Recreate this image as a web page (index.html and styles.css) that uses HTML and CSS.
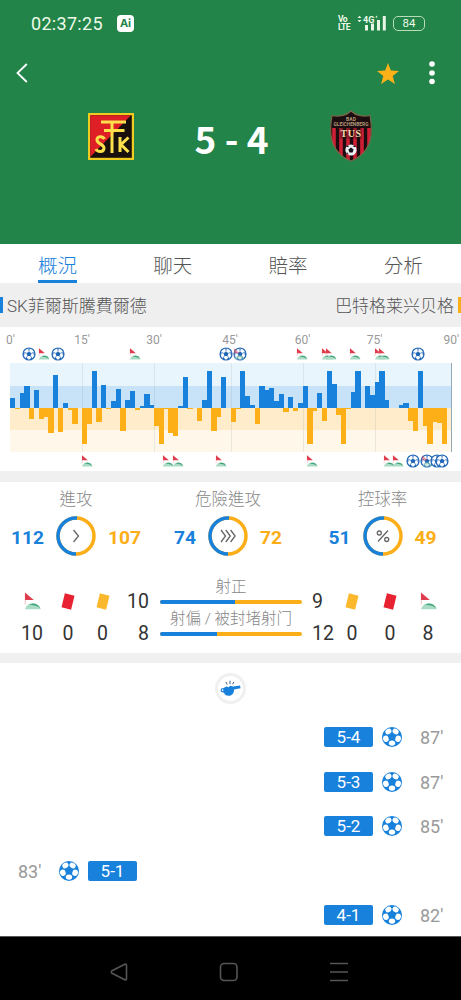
FILE: index.html
```
<!DOCTYPE html>
<html lang="zh-Hant">
<head>
    <meta charset="UTF-8">
    <meta name="viewport" content="width=device-width, initial-scale=1.0">
    <title>SK菲爾斯騰費爾德 5 - 4 巴特格莱兴贝格</title>
    <link rel="stylesheet" href="styles.css">
</head>
<body>
    <!-- Shared icons -->
    <svg class="symbols" aria-hidden="true">
        <symbol id="ball" viewBox="0 0 20 20">
            <circle cx="10" cy="10" r="10" fill="#1881db"/>
            <g fill="#fff">
                <ellipse cx="6.4" cy="4.5" rx="3.2" ry="2.6" transform="rotate(-33 6.4 4.5)"/>
                <ellipse cx="13.6" cy="4.5" rx="3.2" ry="2.6" transform="rotate(33 13.6 4.5)"/>
                <ellipse cx="3.9" cy="11.8" rx="2.8" ry="3.2" transform="rotate(-18 3.9 11.8)"/>
                <ellipse cx="16.1" cy="11.8" rx="2.8" ry="3.2" transform="rotate(18 16.1 11.8)"/>
                <ellipse cx="10" cy="16.1" rx="3.2" ry="2.7"/>
            </g>
            <path d="M10 6.6l3.3 2.4-1.3 3.8H8L6.7 9z" fill="#1881db"/>
        </symbol>
        <symbol id="ball-line" viewBox="0 0 14 14">
            <circle cx="7" cy="7" r="6" fill="#fff" stroke="#2368b8" stroke-width="1.2"/>
            <path d="M7 4.4l2.5 1.8-.9 2.9H5.4l-.9-2.9z" fill="#2368b8"/>
            <path d="M7 4.4V2.6M9.5 6.2l2-.7M8.6 9.1l1.3 1.8M5.4 9.1l-1.3 1.8M4.5 6.2l-2-.7" stroke="#2368b8" stroke-width=".8"/>
            <path d="M4.8 1.5L7 2.7l2.2-1.2zM12.7 5l-1.3.6.4 2.6 1.1.2zM10.6 11.8l-.8-1.2-2 1.4.4 1zM3.4 11.8l.8-1.2 2 1.4-.4 1zM1.3 5l1.3.6-.4 2.6-1.1.2z" fill="#2368b8"/>
        </symbol>
        <symbol id="corner" viewBox="0 0 17 18">
            <path d="M1.3 1v11.5" stroke="#eda9ad" stroke-width=".7"/>
            <path d="M1 .5L9.8 8H1z" fill="#df3d4d"/>
            <path d="M.8 17.3C2.5 12.9 6 10.8 9 11c4 .3 6.6 3.1 7.7 6.3z" fill="#a9dbc5"/>
            <path d="M5 13.2c3.8-3.1 9.6-1.4 11.4 3.4-2.4-2.4-6.4-3.9-11.4-3.4z" fill="#43a47a"/>
        </symbol>
        <symbol id="card" viewBox="0 0 14 17">
            <path d="M3.9.3L13.5 2.7 10.1 16.7.5 14.3z" fill="currentColor"/>
        </symbol>
    </svg>

    <header>
        <div class="status-bar">
            <span class="clock">02:37:25</span>
            <span class="ai">Ai</span>
            <span class="volte">Vo<br>LTE</span>
            <svg class="signal" width="30" height="18" viewBox="0 0 30 18">
                <path d="M.5 4L2.5 1.8 4.500 4zM.5 6l2 2.200L4.500 6z" fill="#e9f5e4"/>
                <text x="6" y="9" class="signal-text">4G</text>
                <path d="M19.5 1.500l1.200 2h-2.400z" fill="#e9f5e4"/>
                <g fill="#e9f5e4">
                    <rect x="8" y="11" width="3" height="5.5"/>
                    <rect x="14" y="9.5" width="3" height="7"/>
                    <rect x="20" y="6" width="3" height="10.5"/>
                    <rect x="25.8" y="2" width="3" height="14.5"/>
                </g>
            </svg>
            <span class="battery">84</span>
        </div>
        <div class="toolbar">
            <svg width="12" height="20" viewBox="0 0 12 20" fill="none" stroke="#fff" stroke-width="1.8"><path d="M10.8 1L1.5 10l9.3 9"/></svg>
            <svg class="star" width="22" height="21" viewBox="0 0 22 21" fill="#fbb117"><path d="M11 0l2.9 7.4 8.1.5-6.3 5.1 2.2 8-6.9-4.5L4.1 21l2.2-8L0 7.9l8.1-.5z"/></svg>
            <svg width="6" height="24" viewBox="0 0 6 24" fill="#fff"><circle cx="3" cy="3" r="2.8"/><circle cx="3" cy="12" r="2.8"/><circle cx="3" cy="20.5" r="2.8"/></svg>
        </div>
        <div class="teams">
            <svg width="46" height="47" viewBox="0 0 46 47">
                <rect width="46" height="47" fill="#f0cb20"/>
                <rect x="2.2" y="2.2" width="41.6" height="42.6" fill="#17100c"/>
                <path d="M2.2 2.2H43L2.2 44z" fill="#df1f26"/>
                <g fill="none" stroke="#fbe04b" stroke-width="3">
                    <path d="M13 9h25M16 17.5h20.5M24 9v31"/>
                    <path d="M16.500 26c-2-3.500-8-3-7.500 1 .5 4.500 7.500 4 7 8.500-.5 4-6.500 4-8 .5"/>
                    <path d="M32 24v15M40.500 24.500l-7.500 7 7.500 7.500"/>
                </g>
            </svg>
            <span class="score">5 - 4</span>
            <svg width="44" height="54" viewBox="0 0 44 54">
                <defs>
                    <clipPath id="shield"><path d="M22 2C17 7 9 8 3 6.5 1 18 .5 27 4.5 36 8 43.5 14 49 22 52c8-3 14-8.5 17.500-16C43.5 27 43 18 41 6.500 35 8 27 7 22 2z"/></clipPath>
                </defs>
                <g clip-path="url(#shield)">
                    <rect width="44" height="54" fill="#1c0d10"/>
                    <path d="M5 19v30M12 19v32M19 19v32M26 19v32M33 19v32M40 19v32" stroke="#d01f35" stroke-width="3.6"/>
                    <rect y="7" width="44" height="12" fill="#1c0d10"/>
                    <path d="M11 19h22v11H11z" fill="#1c0d10" opacity=".35"/>
                </g>
                <path d="M22 2C17 7 9 8 3 6.5 1 18 .5 27 4.5 36 8 43.5 14 49 22 52c8-3 14-8.5 17.500-16C43.5 27 43 18 41 6.500 35 8 27 7 22 2z" fill="none" stroke="#796848" stroke-width="1.2"/>
                <text x="22" y="12" class="crest-small">BAD</text>
                <text x="22" y="17" class="crest-small" textLength="35" lengthAdjust="spacingAndGlyphs">GLEICHENBERG</text>
                <text x="22" y="28" class="crest-name">TUS</text>
                <circle cx="22" cy="41" r="5.6" fill="#eef2f6"/>
                <path d="M22 38.5l2.6 1.9-1 3.1h-3.2l-1-3.1zM17 38l2-2 .8 2zM27 38l-2-2-.8 2zM17.5 44.500l2.300 1.500-1.800-3z" fill="#15151b"/>
            </svg>
        </div>
    </header>

    <nav class="tabs">
        <a class="active" href="#">概況</a>
        <a href="#">聊天</a>
        <a href="#">賠率</a>
        <a href="#">分析</a>
    </nav>

    <div class="names">
        <span class="home">SK菲爾斯騰費爾德</span>
        <span class="away">巴特格莱兴贝格</span>
    </div>

    <!-- Attack momentum chart -->
    <section class="momentum">
        <div class="minutes">
            <span>0'</span><span>15'</span><span>30'</span><span>45'</span><span>60'</span><span>75'</span><span>90'</span>
        </div>
        <div class="markers" id="homeMarkers"></div>
        <div class="chart" id="chart"></div>
        <div class="markers" id="awayMarkers"></div>
    </section>

    <section class="stats">
        <div class="rings">
            <div class="stat">
                <h3>進攻</h3>
                <b class="blue">112</b>
                <svg class="ring" viewBox="0 0 40 40"><circle cx="20" cy="20" r="18" pathLength="100" class="ring-away"/><circle cx="20" cy="20" r="18" pathLength="100" class="ring-home"/><path d="M17.5 14l5 6-5 6"/></svg>
                <b class="orange">107</b>
            </div>
            <div class="stat">
                <h3>危險進攻</h3>
                <b class="blue">74</b>
                <svg class="ring" viewBox="0 0 40 40"><circle cx="20" cy="20" r="18" pathLength="100" class="ring-away"/><circle cx="20" cy="20" r="18" pathLength="100" class="ring-home"/><path d="M13 14l4.5 6-4.5 6M17.8 14l4.5 6-4.5 6M22.6 14l4.5 6-4.5 6"/></svg>
                <b class="orange">72</b>
            </div>
            <div class="stat">
                <h3>控球率</h3>
                <b class="blue">51</b>
                <svg class="ring" viewBox="0 0 40 40"><circle cx="20" cy="20" r="18" pathLength="100" class="ring-away"/><circle cx="20" cy="20" r="18" pathLength="100" class="ring-home"/><path d="M25 14.5L15 25.5"/><circle cx="16.3" cy="17" r="2"/><circle cx="23.7" cy="23.5" r="2"/></svg>
                <b class="orange">49</b>
            </div>
        </div>

        <div class="details">
            <div class="counts counts-home">
                <svg width="17" height="18"><use href="#corner"/></svg>
                <svg class="red" width="14" height="17"><use href="#card"/></svg>
                <svg class="yellow" width="14" height="17"><use href="#card"/></svg>
                <span>10</span><span>0</span><span>0</span>
            </div>
            <div class="shots shots-home"><span>10</span><span>8</span></div>
            <div class="bars">
                <h4>射正</h4>
                <div class="bar"><i style="width: 52.6%"></i></div>
                <h4>射偏 / 被封堵射门</h4>
                <div class="bar"><i style="width: 40%"></i></div>
            </div>
            <div class="shots"><span>9</span><span>12</span></div>
            <div class="counts">
                <svg class="yellow" width="14" height="17"><use href="#card"/></svg>
                <svg class="red" width="14" height="17"><use href="#card"/></svg>
                <svg width="17" height="18"><use href="#corner"/></svg>
                <span>0</span><span>0</span><span>8</span>
            </div>
        </div>
    </section>

    <!-- Match events, newest first -->
    <section class="events">
        <div class="whistle">
            <svg width="21" height="17" viewBox="0 0 21 17" fill="#1881db">
                <path d="M3 8.2L6.5 6.5l2 .8 1.8-1.500L13 6.500l7-1 .6 2.700-6.600 1.300c.2 4-2.300 6.300-5.400 6.300-2.400 0-4-1.100-4.600-3L.6 11.500 1 8.500z"/>
                <circle cx="2.6" cy="10.1" r=".9" fill="#fff"/>
                <path d="M7.2 4.5L5.9 2M10 4V.8M12.6 4.2L13.9 1.8" stroke="#405b80" stroke-width="1"/>
            </svg>
        </div>
        <div class="event away"><b>5-4</b><svg><use href="#ball"/></svg><time>87'</time></div>
        <div class="event away"><b>5-3</b><svg><use href="#ball"/></svg><time>87'</time></div>
        <div class="event away"><b>5-2</b><svg><use href="#ball"/></svg><time>85'</time></div>
        <div class="event"><time>83'</time><svg><use href="#ball"/></svg><b>5-1</b></div>
        <div class="event away"><b>4-1</b><svg><use href="#ball"/></svg><time>82'</time></div>
    </section>

    <footer>
        <svg width="18" height="20" viewBox="0 0 18 20"><path d="M16.5 3.2v13.6c0 1-.8 1.400-1.600 1L2 11.200c-.9-.5-.9-1.900 0-2.400l12.900-6.600c.8-.4 1.600 0 1.600 1z"/></svg>
        <svg width="20" height="20" viewBox="0 0 20 20"><rect x="1.5" y="1.5" width="16.5" height="17" rx="3.5"/></svg>
        <svg width="20" height="20" viewBox="0 0 20 20"><path d="M1 1.5h18M1 10h18M1 18.5h18"/></svg>
    </footer>

    <script>
        // One value per minute: positive = home pressure, negative = away pressure
        const momentum = [
            10, -1, 15, 22, -11, 18, -11, -9, -25, 33, -24, 5, -2, -16, 0,
            -36, -16, 37, -14, 23, -1, 7, 19, -23, 8, 17, -2, 1.5, 14, 3,
            -18, -36, -1, -25, -28, 2, 31, -1, 0, -13, 8, 37, -23, -9, 31, 0,
            -14, -1, 37, 12, 3, -16, 22, 18, 20, 7, 14, -4, 11, -3, 5,
            22, -36, -3, 15, -13, 37, 24, -7, -36, -1, 16, 37, 0, 22, 13,
            26, 37, 8, 0, 0, 3, 5, -13, -23, 37, -18, -36, -14, -15, -36
        ];
        // Slots where a 15 minute line is drawn (first half has one extra minute)
        const lines = [15, 30, 46, 61, 76];
        const chart = document.getElementById('chart');

        momentum.forEach((value, i) => {
            const slot = document.createElement('div');
            slot.className = 'slot' + (lines.includes(i) ? ' line' : '');
            const side = value < 0 ? 'down' : 'up';
            slot.innerHTML = `<div class="${side}" style="height: ${Math.abs(value)}px"></div>`;
            chart.appendChild(slot);
        });

        // Goals and corners, x is the centre of the icon on the time axis
        function addMarkers(id, items) {
            const row = document.getElementById(id);
            items.forEach(([type, x]) => {
                row.innerHTML += `<svg class="${type}" style="left: ${x}px"><use href="#${type}"/></svg>`;
            });
        }

        addMarkers('homeMarkers', [
            ['ball-line', 28.5], ['corner', 43.5], ['ball-line', 57.7], ['corner', 134.5],
            ['ball-line', 225.5], ['ball-line', 240], ['corner', 302],
            ['corner', 327], ['corner', 331], ['corner', 355], ['corner', 380], ['corner', 384],
            ['ball-line', 417.7]
        ]);
        addMarkers('awayMarkers', [
            ['corner', 86.5], ['corner', 168], ['corner', 178], ['corner', 221], ['corner', 312],
            ['corner', 388.5], ['corner', 398], ['ball-line', 413], ['ball-line', 427],
            ['ball-line', 437], ['ball-line', 441.5]
        ]);

        // Corners that share a minute with a goal show faintly over the ball
        function addFaded(id, x) {
            document.getElementById(id).innerHTML +=
                `<svg class="corner faded" style="left: ${x}px"><use href="#corner"/></svg>`;
        }
        addFaded('homeMarkers', 239);
        addFaded('awayMarkers', 427);
    </script>
</body>
</html>
```
FILE: styles.css
```
* {
    box-sizing: border-box;
}

body {
    margin: 0;
    width: 461px;
    height: 1000px;
    overflow: hidden;
    display: flex;
    flex-direction: column;
    background-color: #fff;
    font-family: Roboto, "Noto Sans CJK TC", sans-serif;
    color: #333;
}

svg {
    display: block;
    flex: none;
}

h3, h4 {
    margin: 0;
    font-weight: 300;
}

.symbols {
    position: absolute;
    width: 0;
    height: 0;
}

/* Header */
header {
    height: 244px;
    flex: none;
    background-color: #228448;
    color: #fff;
}

.status-bar {
    height: 46px;
    display: flex;
    align-items: center;
    padding: 0 36px 0 31px;
    color: #eefaea;
}

.clock {
    width: 73px;
    font-size: 18px;
    letter-spacing: 0.3px;
    white-space: nowrap;
}

.ai {
    width: 17px;
    height: 17px;
    margin-left: 13px;
    border-radius: 4px;
    background-color: #fff;
    color: #228448;
    font: bold 11px/17px Inter, sans-serif;
    text-align: center;
}

.volte {
    margin-left: auto;
    margin-right: 7px;
    font-size: 8.5px;
    line-height: 8px;
    font-weight: bold;
    width: 12px;
    letter-spacing: -0.6px;
}

.signal-text {
    font: bold 9px Roboto, sans-serif;
    fill: #eefaea;
}

.battery {
    width: 32px;
    height: 15px;
    margin-left: 6px;
    border: 1.5px solid #b9dcb9;
    border-radius: 5px;
    font-size: 11.5px;
    line-height: 13px;
    text-align: center;
}

.toolbar {
    height: 54px;
    display: flex;
    align-items: center;
    padding: 0 26px 0 16px;
}

.star {
    margin-left: auto;
    margin-right: 30px;
}

.teams {
    height: 72px;
    display: flex;
    align-items: center;
    justify-content: space-between;
    padding: 0 88px;
}

.score {
    font-size: 37px;
    font-weight: bold;
    font-family: "Noto Sans CJK TC", sans-serif;
    line-height: 46px;
    padding-top: 4px;
}

.crest-small {
    font: bold 5px Roboto, sans-serif;
    fill: #b69a78;
    text-anchor: middle;
}

.crest-name {
    font: bold 10px "Liberation Serif", serif;
    fill: #f3dcab;
    text-anchor: middle;
    letter-spacing: 0.5px;
}

/* Tabs */
.tabs {
    height: 39px;
    flex: none;
    display: flex;
    justify-content: space-around;
}

.tabs a {
    flex: 0 0 39px;
    height: 39px;
    padding-top: 7px;
    color: #555;
    font-size: 19.5px;
    font-weight: 300;
    line-height: 31px;
    text-decoration: none;
    white-space: nowrap;
}

.tabs .active {
    color: #1881db;
    border-bottom: 3px solid #1881db;
}

.names {
    height: 44px;
    flex: none;
    display: flex;
    justify-content: space-between;
    align-items: center;
    background-color: #efefef;
    font-size: 17px;
    font-weight: 300;
    color: #555;
}

.names span {
    line-height: 18px;
    height: 16px;
    white-space: nowrap;
}

.home {
    border-left: 3px solid #1881db;
    padding-left: 4px;
}

.names .away {
    padding-right: 4px;
    border-right: 3px solid #fbae17;
}

/* Momentum chart */
.momentum {
    height: 144px;
    flex: none;
    padding-top: 5px;
}

.minutes {
    height: 15px;
    display: grid;
    grid-template-columns: 46px 72px 72px 80px 65px 79px 1fr;
    padding-right: 2px;
    color: #999;
    font-size: 12px;
    line-height: 17px;
    text-align: center;
}

.minutes span:first-child {
    padding-left: 6px;
    text-align: left;
}

.minutes span:last-child {
    text-align: right;
}

.markers {
    position: relative;
    height: 16px;
}

.markers svg {
    position: absolute;
    transform: translate(-50%, 0);
}

.markers .ball-line {
    top: 0;
    width: 14px;
    height: 14px;
}

.markers .corner {
    top: 1px;
    width: 12px;
    height: 12px;
}

.markers .faded {
    opacity: 0.5;
}

#awayMarkers {
    top: 2px;
}

.chart {
    height: 89px;
    margin: 0 9.5px 0 10px;
    display: flex;
    border-right: 1px solid #93a9b8;
    background: linear-gradient(#e9f5fd 0 22.5px, #c8e2f8 22.5px 44.5px, #ffeccb 44.5px 66.5px, #fff7ea 66.5px);
}

.slot {
    flex: 0 0 4.8px;
    min-width: 0;
    display: flex;
}

.line {
    box-shadow: inset 1px 0 0 rgba(120, 140, 150, 0.15);
}

.up, .down {
    flex: none;
    width: 5.2px;
}

.up {
    background-color: #1881db;
    align-self: flex-end;
    margin-bottom: 44.5px;
}

.down {
    background-color: #fdaf17;
    margin-top: 44.5px;
}

/* Stats */
.stats {
    height: 192px;
    flex: none;
    border-top: 11px solid #f0f0f0;
    border-bottom: 10px solid #f0f0f0;
}

.rings {
    display: grid;
    grid-template-columns: 152px 152px 157px;
    padding-top: 5px;
}

.stat {
    display: grid;
    grid-template-columns: 1fr 40px 1fr;
    column-gap: 12px;
    align-items: center;
    font-size: 19.2px;
}

.stat h3 {
    grid-column: 1 / 4;
    height: 26px;
    margin-bottom: 3px;
    font-size: 16.5px;
    line-height: 26px;
    text-align: center;
    color: #888;
}

.stat b {
    padding-top: 3px;
    line-height: 24px;
}

.blue {
    color: #1881db;
    text-align: right;
}

.orange {
    color: #fbae17;
}

.ring {
    width: 40px;
    height: 40px;
    fill: none;
    stroke: #666;
    stroke-width: 1.3;
}

.ring-home, .ring-away {
    stroke-width: 3.5;
    stroke: #fbae17;
}

.ring-home {
    stroke: #1881db;
    stroke-dasharray: 51 49;
    transform: rotate(90deg);
    transform-origin: 20px 20px;
}

.details {
    display: flex;
    padding: 17px 0 0 14px;
    font-size: 19.5px;
}

.counts {
    display: grid;
    grid-template-columns: repeat(3, 38px);
    grid-template-rows: 32px 32px;
    align-items: center;
    justify-items: center;
    padding-top: 12px;
}

.counts-home {
    grid-template-columns: 36px 36px 33px;
}

.red {
    color: #e82230;
}

.yellow {
    color: #fbb82c;
}

.shots {
    width: 21px;
    padding-top: 13px;
    line-height: 32px;
    display: flex;
    flex-direction: column;
}

.shots-home {
    width: 30px;
    text-align: right;
}

.bars {
    width: 142px;
    margin: 5px 10px 0 11px;
}

.bars h4 {
    height: 22px;
    font-size: 15.5px;
    line-height: 18px;
    text-align: center;
    white-space: nowrap;
    color: #888;
}

.bar {
    height: 4px;
    margin-bottom: 6px;
    border-radius: 2px;
    overflow: hidden;
    background-color: #fbae17;
}

.bar i {
    display: block;
    height: 100%;
    background-color: #1881db;
}

/* Events */
.events {
    height: 273px;
    flex: none;
    overflow: hidden;
}

.whistle {
    width: 31px;
    height: 31px;
    margin: 10px auto 11px;
    border: 3px solid #f0f0f0;
    border-radius: 50%;
    display: flex;
    align-items: center;
    justify-content: center;
}

.event {
    height: 44.5px;
    display: flex;
    align-items: center;
    padding: 0 18px;
}

.event svg {
    width: 20px;
    height: 20px;
    margin: 0 9px;
}

.event b {
    width: 49px;
    height: 20px;
    border-radius: 2px;
    background-color: #1881db;
    color: #fff;
    font-size: 17px;
    font-weight: normal;
    line-height: 20px;
    text-align: center;
}

.event time {
    width: 32px;
    padding-top: 1px;
    font-size: 18px;
    color: #999;
}

.event.away {
    justify-content: flex-end;
}

.event.away time {
    width: 23px;
    margin-left: 9px;
}

/* System navigation */
footer {
    height: 64px;
    flex: none;
    display: flex;
    justify-content: space-between;
    align-items: center;
    padding: 6px 112px 0 110px;
    background-color: #000;
    border-top: 1px solid #555;
    fill: none;
    stroke: #555;
    stroke-width: 1.6;
}
```
